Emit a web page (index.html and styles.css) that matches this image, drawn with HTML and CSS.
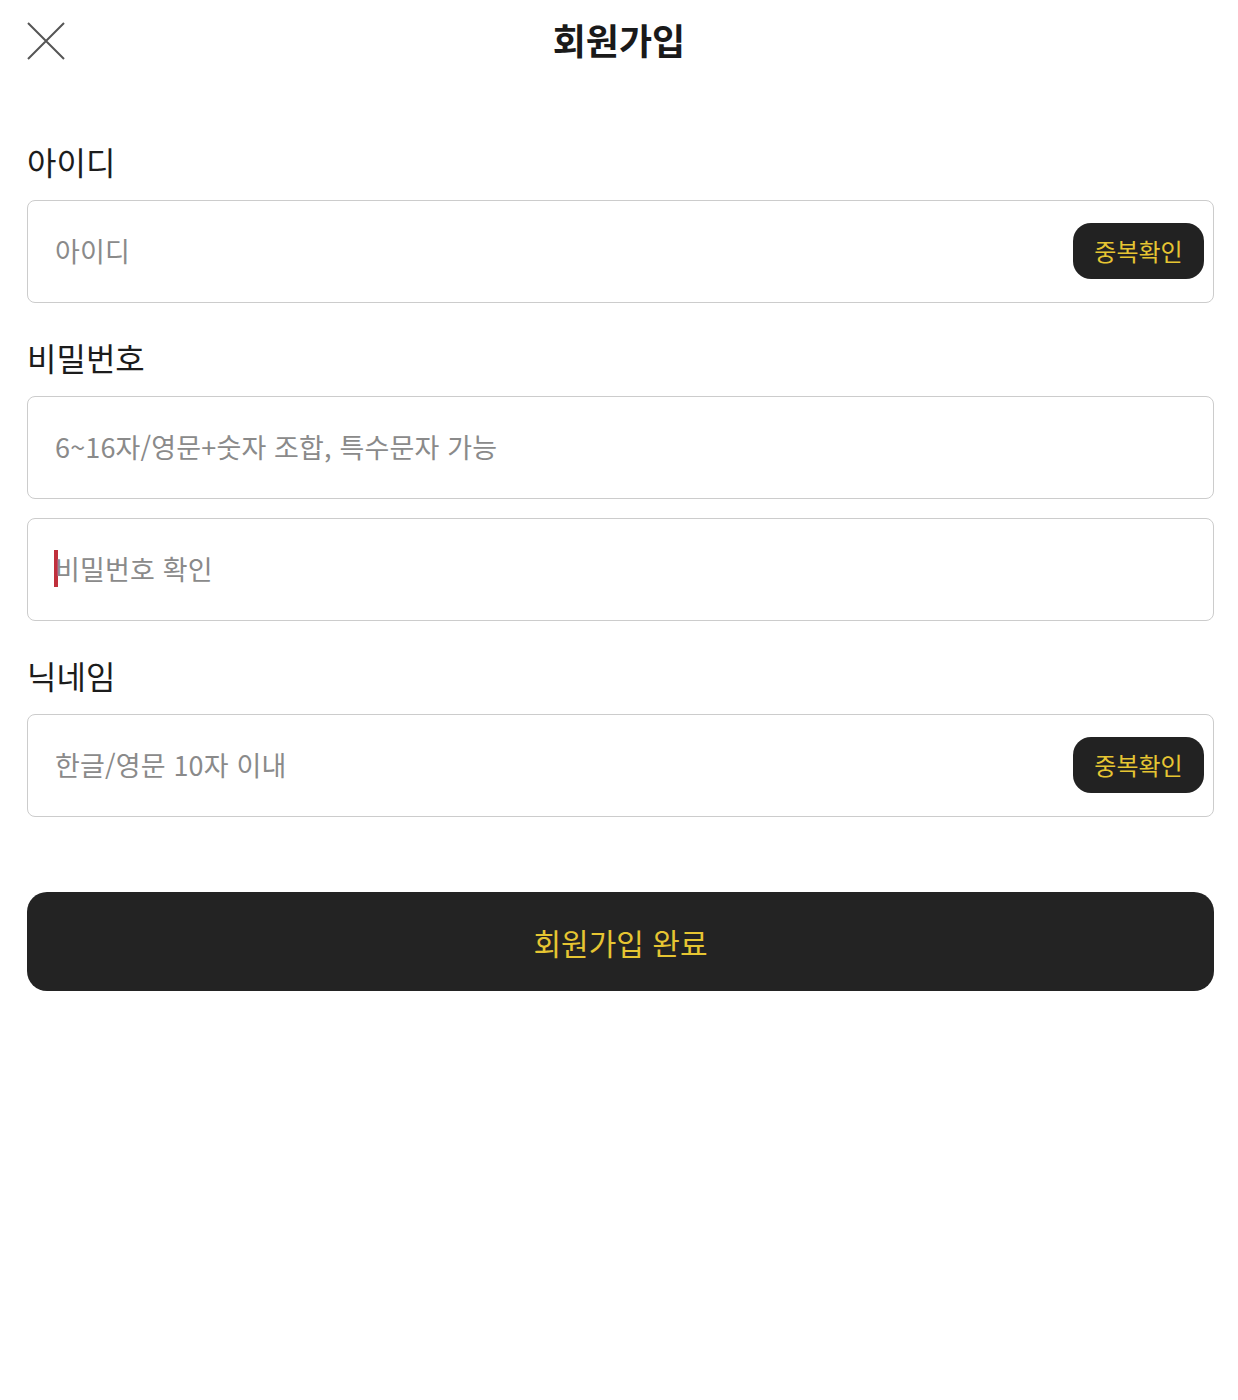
FILE: index.html
```html
<!DOCTYPE html>
<html lang="ko">
<head>
<meta charset="utf-8">
<title>회원가입</title>
<link rel="stylesheet" href="styles.css">
</head>
<body>
<header class="top">
  <span class="close" aria-label="닫기">
    <svg width="40" height="40" viewBox="0 0 40 40"><path d="M2 2 L38 38 M38 2 L2 38" stroke="#555" stroke-width="2" fill="none"/></svg>
  </span>
  <h1 class="title">회원가입</h1>
</header>
<main class="form">
  <div class="label">아이디</div>
  <div class="field">
    <span class="ph">아이디</span>
    <span class="check">중복확인</span>
  </div>

  <div class="label gap">비밀번호</div>
  <div class="field">
    <span class="ph">6~16자/영문+숫자 조합, 특수문자 가능</span>
  </div>
  <div class="field second">
    <span class="ph"><span class="caret"></span>비밀번호 확인</span>
  </div>

  <div class="label gap">닉네임</div>
  <div class="field">
    <span class="ph">한글/영문 10자 이내</span>
    <span class="check">중복확인</span>
  </div>

  <div class="submit">회원가입 완료</div>
</main>
</body>
</html>
```
FILE: styles.css
```css
* { box-sizing: border-box; }
body {
  margin: 0;
  background: #fff;
  font-family: "Noto Sans CJK KR", "Noto Sans", sans-serif;
  color: #222;
}
.top {
  position: relative;
  height: 82px;
  display: flex;
  align-items: center;
  justify-content: center;
}
.close {
  position: absolute;
  left: 26px;
  top: 21px;
  width: 40px;
  height: 40px;
  display: block;
}
.close svg { display: block; }
.title {
  margin: 0;
  font-size: 36px;
  font-weight: 700;
  line-height: 1;
  color: #1a1a1a;
  margin-top: -4px;
}
.form {
  padding: 0 24px 0 27px;
  margin-top: 59px;
}
.label {
  font-size: 32px;
  line-height: 40px;
  color: #1c1c1c;
  margin-bottom: 19px;
}
.label.gap { margin-top: 34px; }
.field {
  height: 103px;
  border: 1.5px solid #cccccc;
  border-radius: 8px;
  display: flex;
  align-items: center;
  justify-content: space-between;
  padding: 0 9px 0 27px;
}
.field.second { margin-top: 19px; }
.ph {
  font-size: 27px;
  letter-spacing: 0.15px;
  color: #8a8a8a;
  display: flex;
  align-items: center;
  margin-top: -3px;
}
.caret {
  display: inline-block;
  width: 4px;
  height: 37px;
  background: #c0303c;
  margin-right: -3px;
  margin-left: -1px;
}
.check {
  background: #222;
  color: #e6c532;
  font-size: 24px;
  border-radius: 18px;
  height: 56px;
  width: 131px;
  display: flex;
  align-items: center;
  justify-content: center;
  margin-top: -2px;
}
.submit {
  margin-top: 75px;
  height: 99px;
  background: #232323;
  border-radius: 20px;
  color: #e6c532;
  font-size: 30px;
  display: flex;
  align-items: center;
  justify-content: center;
}
```
